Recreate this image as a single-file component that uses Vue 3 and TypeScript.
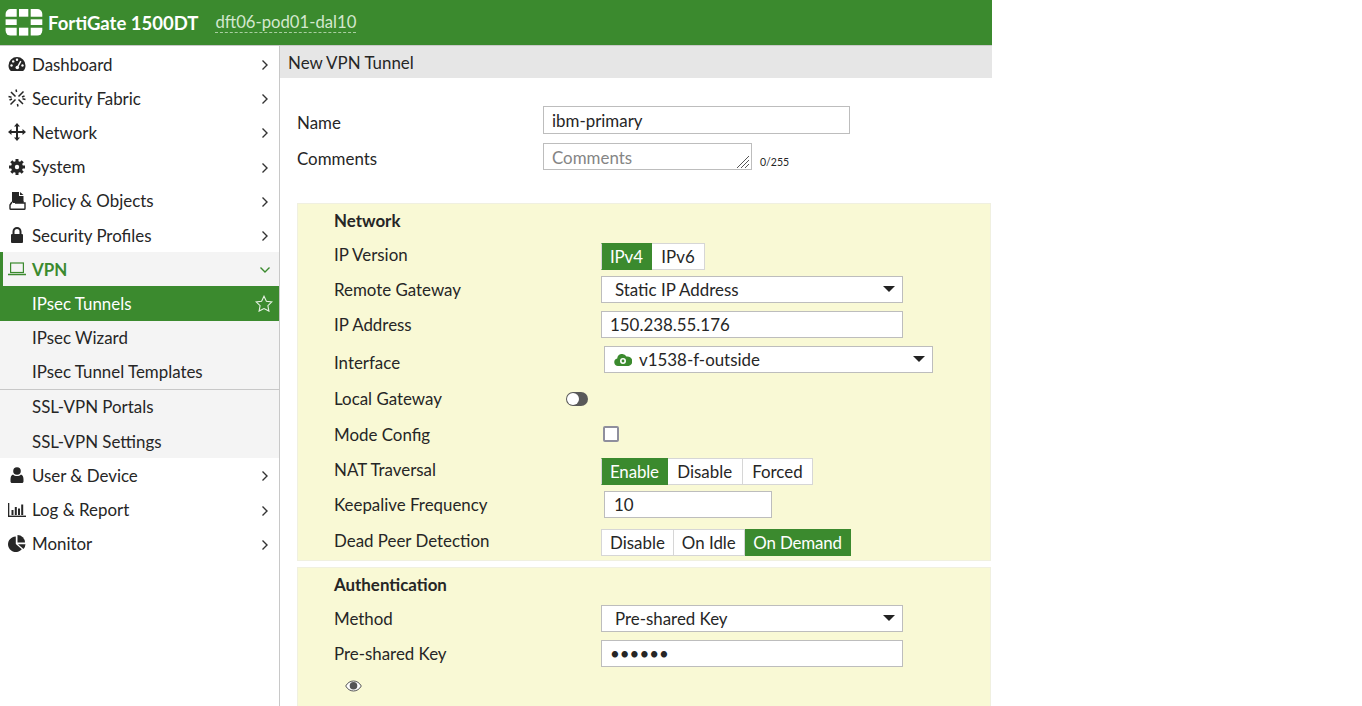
<script setup lang="ts">
interface Item { label: string; icon: string }
const topItems: Item[] = [
  { label: 'Dashboard', icon: 'dashboard' },
  { label: 'Security Fabric', icon: 'fabric' },
  { label: 'Network', icon: 'network' },
  { label: 'System', icon: 'system' },
  { label: 'Policy & Objects', icon: 'policy' },
  { label: 'Security Profiles', icon: 'lock' },
]
const bottomItems: Item[] = [
  { label: 'User & Device', icon: 'user' },
  { label: 'Log & Report', icon: 'log' },
  { label: 'Monitor', icon: 'monitor' },
]
</script>

<template>
  <div class="page">
    <header class="topbar">
      <svg class="logo" width="38" height="27" viewBox="0 0 38 27">
        <path d="M.6 5a5 5 0 0 1 5-5h6.100v7.700H.6z" fill="#fff" />
        <rect x="14" y="0" width="9.300" height="7.700" fill="#fff" />
        <path d="M25.700 0h6.600a5 5 0 0 1 5 5v2.700H25.700z" fill="#fff" />
        <rect x=".6" y="10.300" width="11.100" height="5.700" fill="#fff" />
        <rect x="25.700" y="10.300" width="11.600" height="5.700" fill="#fff" />
        <path d="M.6 18.700h11.100v7.900H5.600a5 5 0 0 1-5-5z" fill="#fff" />
        <rect x="14" y="18.700" width="9.300" height="7.900" fill="#fff" />
        <path d="M25.700 18.700h11.600v2.900a5 5 0 0 1-5 5h-6.600z" fill="#fff" />
      </svg>
      <span class="product">FortiGate 1500DT</span>
      <span class="host">dft06-pod01-dal10</span>
    </header>

    <div class="body">
      <nav class="sidebar">
        <a v-for="item in topItems" :key="item.label" class="nav-row">
          <span class="nav-icon">
            <svg v-if="item.icon === 'dashboard'" width="18" height="16" viewBox="0 0 18 16">
              <path d="M9 1a8.500 8.500 0 0 0-8.500 8.500c0 2 .6 3.700 1.800 5a1 1 0 0 0 .8.400h11.800a1 1 0 0 0 .8-.4c1.200-1.300 1.800-3 1.800-5A8.500 8.500 0 0 0 9 1z" fill="#262626" />
              <circle cx="3.500" cy="9.500" r="1.200" fill="#fff" />
              <circle cx="5.200" cy="5.400" r="1.200" fill="#fff" />
              <circle cx="9" cy="3.800" r="1.200" fill="#fff" />
              <circle cx="14.500" cy="9.500" r="1.200" fill="#fff" />
              <path d="M12.800 5.200 9.900 10.500" stroke="#fff" stroke-width="1.500" />
              <circle cx="9.300" cy="11.500" r="1.800" fill="#fff" />
            </svg>
            <svg v-else-if="item.icon === 'fabric'" width="18" height="18" viewBox="0 0 18 18" stroke="#262626" stroke-width="1.500" fill="none">
              <path d="M3 3l4.500 4.500M10.500 10.500 15 15M15.500 2.500 10.500 7.500M7.500 10.500 2.500 15.500" />
              <path d="M.5 7.500l3 .8M14.500 9.700l3 .8M16.500 7l-2.500 1M4 10l-2.500 1M8 .5l.6 2.500M9.400 15l.6 2.500" />
            </svg>
            <svg v-else-if="item.icon === 'network'" width="18" height="18" viewBox="0 0 18 18" fill="#262626">
              <path d="M9 0l3 3.500h-2V8h4.500V6L18 9l-3.500 3v-2H10v4.500h2L9 18l-3-3.500h2V10H3.500v2L0 9l3.500-3v2H8V3.500H6z" />
            </svg>
            <svg v-else-if="item.icon === 'system'" width="16" height="16" viewBox="0 0 16 16">
              <path d="M8 4.500 A3.500 3.500 0 1 0 8 11.500 A3.500 3.500 0 1 0 8 4.500" fill="none" stroke="#262626" stroke-width="5" />
              <g stroke="#262626" stroke-width="3">
                <path d="M8 0v3M8 13v3M0 8h3M13 8h3M2.300 2.300l2.200 2.200M11.500 11.500l2.200 2.200M13.700 2.300l-2.200 2.200M4.500 11.500l-2.200 2.200" />
              </g>
              <circle cx="8" cy="8" r="2.200" fill="#fff" />
            </svg>
            <svg v-else-if="item.icon === 'policy'" width="17" height="18" viewBox="0 0 17 18">
              <path d="M3 0h7v4h4.500v6H3z" fill="#262626" />
              <path d="M11 0l3.500 3H11z" fill="#262626" />
              <path d="M3 10 1 13v3.500c0 .5.400.8.800.8h13.400c.4 0 .8-.3.800-.8V11H6" fill="#fff" stroke="#262626" stroke-width="1.400" />
              <path d="M3 9h11.500v2H4z" fill="#262626" />
            </svg>
            <svg v-else-if="item.icon === 'lock'" width="14" height="16" viewBox="0 0 14 16">
              <path d="M3.500 8V4.500a3.500 3.500 0 0 1 7 0V8" fill="none" stroke="#262626" stroke-width="2" />
              <rect x="1" y="7" width="12" height="9" rx="1" fill="#262626" />
            </svg>
          </span>
          <span class="nav-label">{{ item.label }}</span>
          <svg class="chev" width="8" height="12" viewBox="0 0 8 12"><path d="M1.500 1.500 6 6l-4.500 4.500" fill="none" stroke="#333" stroke-width="1.400" /></svg>
        </a>

        <a class="nav-row vpn">
          <span class="nav-icon">
            <svg width="18" height="14" viewBox="0 0 18 14" fill="none" stroke="#3b8a2e" stroke-width="1.200">
              <rect x="2.600" y="1" width="12.800" height="9.500" />
              <path d="M0 12.500h18" stroke-width="1.500" />
            </svg>
          </span>
          <span class="nav-label">VPN</span>
          <svg class="chev" width="12" height="8" viewBox="0 0 12 8"><path d="M1.500 1.500 6 6l4.500-4.500" fill="none" stroke="#3b8a2e" stroke-width="1.400" /></svg>
        </a>

        <div class="submenu">
          <a class="nav-row sub active">
            <span class="nav-label">IPsec Tunnels</span>
            <svg class="star" width="18" height="17" viewBox="0 0 18 17"><path d="M9 1.200l2.400 5 5.500.7-4 3.800 1 5.400L9 13.500l-4.900 2.600 1-5.400-4-3.800 5.500-.7z" fill="none" stroke="#e8f2e5" stroke-width="1.100" /></svg>
          </a>
          <a class="nav-row sub"><span class="nav-label">IPsec Wizard</span></a>
          <a class="nav-row sub"><span class="nav-label">IPsec Tunnel Templates</span></a>
          <div class="sub-divider" />
          <a class="nav-row sub"><span class="nav-label">SSL-VPN Portals</span></a>
          <a class="nav-row sub"><span class="nav-label">SSL-VPN Settings</span></a>
        </div>

        <a v-for="item in bottomItems" :key="item.label" class="nav-row">
          <span class="nav-icon">
            <svg v-if="item.icon === 'user'" width="14" height="16" viewBox="0 0 14 16" fill="#262626">
              <circle cx="7" cy="4" r="3.800" />
              <path d="M3 7.500C1.200 8.200.5 10 .5 12.500V14.500c0 .8.700 1.500 1.500 1.500h10c.8 0 1.500-.7 1.500-1.500V12.500c0-2.500-.7-4.300-2.500-5-1 1-2.300 1.500-4 1.500s-3-.5-4-1.500z" />
            </svg>
            <svg v-else-if="item.icon === 'log'" width="18" height="14" viewBox="0 0 18 14" fill="#262626">
              <rect x="0" y="0" width="1.300" height="14" />
              <rect x="0" y="12.600" width="18" height="1.400" />
              <rect x="3.500" y="7" width="2" height="5" />
              <rect x="6.800" y="4" width="2" height="8" />
              <rect x="10" y="5.500" width="2" height="6.500" />
              <rect x="13.200" y="1.500" width="2" height="10.500" />
            </svg>
            <svg v-else width="18" height="17" viewBox="0 0 18 17" fill="#262626">
              <path d="M7.800 1.500a7.800 7.800 0 1 0 6 12.800L7.800 9z" />
              <path d="M9.500 0a7.600 7.600 0 0 1 7.500 7.500H9.500z" />
              <path d="M10 9.300h7.500a7.600 7.600 0 0 1-2 4.700z" />
            </svg>
          </span>
          <span class="nav-label">{{ item.label }}</span>
          <svg class="chev" width="8" height="12" viewBox="0 0 8 12"><path d="M1.500 1.500 6 6l-4.500 4.500" fill="none" stroke="#333" stroke-width="1.400" /></svg>
        </a>
      </nav>

      <main class="content">
        <div class="title">New VPN Tunnel</div>
        <div class="form">
          <div class="top-row name-row">
            <label class="top-label name-label">Name</label>
            <input class="field name-input" value="ibm-primary" />
          </div>
          <div class="top-row comment-row">
            <label class="top-label comment-label">Comments</label>
            <div class="comment-box">
              <textarea class="field comment-input" placeholder="Comments" />
              <svg class="grip" width="14" height="14" viewBox="0 0 14 14" stroke="#555" stroke-width="1"><path d="M1 13 13 1M5 13l8-8M9 13l4-4" /></svg>
            </div>
            <span class="counter">0/255</span>
          </div>

          <section class="panel network">
            <h3 class="heading">Network</h3>

            <div class="row ipver">
              <label class="lab lab-2">IP Version</label>
              <div class="seg"><span class="on">IPv4</span><span>IPv6</span></div>
            </div>
            <div class="row gap6">
              <label class="lab lab-4">Remote Gateway</label>
              <div class="field select wide">Static IP Address<i class="caret" /></div>
            </div>
            <div class="row gap8">
              <label class="lab lab-4">IP Address</label>
              <input class="field wide" value="150.238.55.176" />
            </div>
            <div class="row gap8">
              <label class="lab lab-7">Interface</label>
              <div class="field select iface">
                <svg class="cloud" width="18" height="13" viewBox="0 0 18 13">
                  <path d="M4 13a3.800 3.800 0 0 1-.8-7.500A5 5 0 0 1 12.500 3.500 4.800 4.800 0 0 1 14.500 13z" fill="#3b8a2e" />
                  <circle cx="9" cy="8" r="3" fill="#fff" />
                  <circle cx="9" cy="8" r="1.400" fill="#3b8a2e" />
                </svg>
                v1538-f-outside<i class="caret" />
              </div>
            </div>
            <div class="row toggle-row">
              <label class="lab toggle-label">Local Gateway</label>
              <span class="toggle"><i /></span>
            </div>
            <div class="row mode-row">
              <label class="lab mode-label">Mode Config</label>
              <span class="check" />
            </div>
            <div class="row nat-row">
              <label class="lab lab-2">NAT Traversal</label>
              <div class="seg"><span class="on">Enable</span><span>Disable</span><span>Forced</span></div>
            </div>
            <div class="row gap6">
              <label class="lab lab-4">Keepalive Frequency</label>
              <input class="field keep" value="10" />
            </div>
            <div class="row dpd-row">
              <label class="lab lab-2">Dead Peer Detection</label>
              <div class="seg seg-tight"><span>Disable</span><span>On Idle</span><span class="on">On Demand</span></div>
            </div>
          </section>

          <section class="panel auth">
            <h3 class="heading">Authentication</h3>
            <div class="row method-row">
              <label class="lab lab-4">Method</label>
              <div class="field select wide">Pre-shared Key<i class="caret" /></div>
            </div>
            <div class="row gap8">
              <label class="lab lab-4">Pre-shared Key</label>
              <input class="field wide pass" type="password" value="secret" />
            </div>
            <svg class="eye" width="17" height="12" viewBox="0 0 17 12">
              <path d="M.7 6C2.500 2.800 5.200 1 8.500 1s6 1.800 7.800 5c-1.800 3.200-4.500 5-7.800 5S2.500 9.200.7 6z" fill="#fff" stroke="#555" stroke-width="1" />
              <circle cx="8.500" cy="5.800" r="3.800" fill="#555" />
            </svg>
          </section>
        </div>
      </main>
    </div>
  </div>
</template>

<style>
html, body { margin: 0; background: #fff; overflow: hidden; }
</style>

<style scoped>
.page {
  width: 992px;
  height: 706px;
  overflow: hidden;
  font-family: Lato, "Liberation Sans", sans-serif;
  font-size: 16.9px;
  color: #262626;
}
.topbar {
  height: 45px;
  background: #3b8a2e;
  border-bottom: 1px solid #c9c9c9;
  display: flex;
  align-items: center;
  padding-left: 5px;
}
.logo { margin-right: 5px; }
.product { color: #fff; font-weight: 700; font-size: 18.500px; }
.host {
  color: #d4e8ce;
  margin-left: 17px;
  font-size: 16.700px;
  line-height: 20px;
  border-bottom: 1px dashed #a9cfa1;
}
.body { display: flex; height: 660px; }
.sidebar {
  width: 279px;
  flex: none;
  border-right: 1px solid #c8c8c8;
  padding-top: 1px;
  background: #fff;
}
.nav-row {
  height: 34.2px;
  display: flex;
  align-items: center;
  box-sizing: border-box;
  padding-right: 10px;
}
.nav-icon {
  width: 18px;
  margin-left: 8px;
  margin-right: 6px;
  display: flex;
  justify-content: center;
  align-items: center;
  flex: none;
}
.nav-label { flex: 1; }
.chev { flex: none; margin-top: 2px; }
.vpn {
  background: #f4f4f4;
  color: #3b8a2e;
  font-weight: 700;
  border-left: 3px solid #3b8a2e;
}
.vpn .nav-icon { margin-left: 5px; }
.vpn .chev { margin-right: -2px; }
.submenu { background: #f4f4f4; }
.sub { padding-left: 32px; }
.active { background: #3b8a2e; color: #fff; padding-right: 6px; }
.sub-divider { height: 1px; background: #c8c8c8; }
.content { flex: 1; min-width: 0; }
.title {
  height: 32px;
  line-height: 33px;
  background: #e6e6e6;
  padding-left: 8px;
}
.form { padding: 0 1px 0 17px; }
.top-row { display: flex; position: relative; }
.name-row { margin-top: 28px; }
.comment-row { margin-top: 9px; }
.top-label { width: 246px; flex: none; line-height: 20px; }
.name-label { margin-top: 7px; }
.comment-label { margin-top: 6px; }
.field {
  box-sizing: border-box;
  display: block;
  height: 27px;
  border: 1.500px solid #bdbdbd;
  background: #fff;
  color: #262626;
  font: inherit;
  padding: 0 8px;
  outline: none;
  border-radius: 0;
}
.name-input { width: 307px; height: 28px; }
.comment-box { position: relative; width: 209px; height: 27px; }
.comment-input { width: 100%; height: 100%; resize: none; line-height: 24px; overflow: hidden; padding-top: 2px; }
.comment-input::placeholder { color: #858585; opacity: 1; }
.grip { position: absolute; right: 2px; bottom: 1px; }
.counter { font-size: 10.500px; margin: 12px 0 0 8px; line-height: 14px; }

.panel {
  position: relative;
  background: #f9f9d5;
  border: 1px solid #f0f0e0;
  box-sizing: border-box;
  padding: 7px 0 0 36px;
}
.network { height: 358px; margin-top: 33px; }
.auth { height: 150px; margin-top: 6px; }
.heading { margin: 0; font-size: 16.900px; font-weight: 700; line-height: 20px; }
.row { display: flex; align-items: flex-start; }
.lab { width: 267px; flex: none; line-height: 20px; }
.lab-2 { margin-top: 2px; }
.lab-4 { margin-top: 4px; }
.lab-7 { margin-top: 7px; }
.ipver { margin-top: 12px; }
.gap6 { margin-top: 6px; }
.gap8 { margin-top: 8px; }
.wide { width: 302px; }
.select {
  display: flex;
  align-items: center;
  position: relative;
  padding-left: 13px;
}
.caret {
  position: absolute;
  right: 7px;
  top: 9px;
  width: 0;
  height: 0;
  border-left: 6px solid transparent;
  border-right: 6px solid transparent;
  border-top: 6px solid #222;
}
.iface { width: 329px; margin-left: 3px; padding-left: 9px; }
.cloud { margin-right: 7px; }
.toggle-row { margin-top: 16px; height: 20px; align-items: center; }
.toggle-label { width: 232px; }
.toggle {
  width: 22px;
  height: 14px;
  border-radius: 7px;
  background: #595959;
  display: block;
  position: relative;
}
.toggle i {
  position: absolute;
  left: 1px;
  top: 1px;
  width: 12px;
  height: 12px;
  border-radius: 50%;
  background: #fff;
}
.mode-row { margin-top: 15px; height: 20px; align-items: center; }
.mode-label { width: 269px; margin-top: 1px; }
.check {
  display: block;
  width: 16px;
  height: 16px;
  box-sizing: border-box;
  border: 2px solid #8f8f9d;
  border-radius: 2px;
  background: #fff;
}
.nat-row { margin-top: 14px; }
.dpd-row { margin-top: 11px; }
.seg { display: flex; height: 27px; }
.seg span {
  box-sizing: border-box;
  height: 100%;
  padding: 0 9.500px;
  line-height: 26px;
  background: #fff;
  border: 1px solid #d6d6d6;
  border-left: none;
  white-space: nowrap;
}
.seg span:first-child { border-left: 1px solid #d6d6d6; }
.seg-tight span { padding: 0 8px; }
.seg .on {
  background: #3b8a2e;
  color: #fff;
  border-color: #3b8a2e;
  padding: 0 8px;
  letter-spacing: -0.15px;
}
.seg-tight .on { padding: 0 8.500px; }
.keep { width: 168px; margin-left: 3px; height: 27px; padding-left: 9px; }
.method-row { margin-top: 10px; }
.pass { padding-left: 8px; }
.eye { display: block; margin: 13px 0 0 11px; }
</style>
